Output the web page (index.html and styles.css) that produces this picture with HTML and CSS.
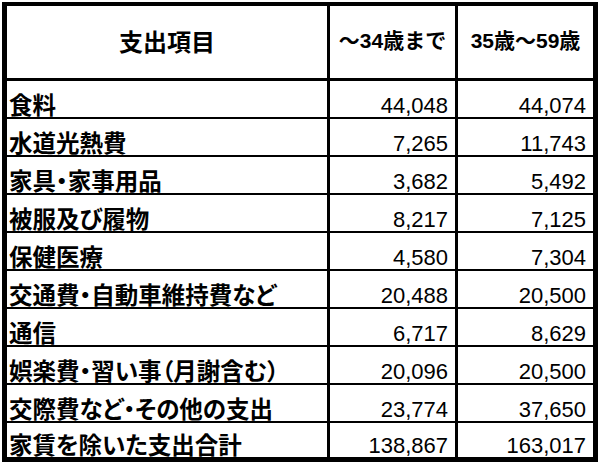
FILE: index.html
```html
<!DOCTYPE html>
<html lang="ja">
<head>
<meta charset="utf-8">
<title>支出項目</title>
<link rel="stylesheet" href="styles.css">
</head>
<body>
<table class="sheet">
  <thead>
    <tr class="head">
      <th class="c1">支出項目</th>
      <th class="c2">～34歳まで</th>
      <th class="c3">35歳～59歳</th>
    </tr>
  </thead>
  <tbody>
    <tr><td class="label">食料</td><td class="num">44,048</td><td class="num">44,074</td></tr>
    <tr><td class="label">水道光熱費</td><td class="num">7,265</td><td class="num">11,743</td></tr>
    <tr><td class="label">家具・家事用品</td><td class="num">3,682</td><td class="num">5,492</td></tr>
    <tr><td class="label">被服及び履物</td><td class="num">8,217</td><td class="num">7,125</td></tr>
    <tr><td class="label">保健医療</td><td class="num">4,580</td><td class="num">7,304</td></tr>
    <tr><td class="label">交通費・自動車維持費など</td><td class="num">20,488</td><td class="num">20,500</td></tr>
    <tr><td class="label">通信</td><td class="num">6,717</td><td class="num">8,629</td></tr>
    <tr><td class="label">娯楽費・習い事（月謝含む）</td><td class="num">20,096</td><td class="num">20,500</td></tr>
    <tr><td class="label">交際費など・その他の支出</td><td class="num">23,774</td><td class="num">37,650</td></tr>
    <tr class="last"><td class="label">家賃を除いた支出合計</td><td class="num">138,867</td><td class="num">163,017</td></tr>
  </tbody>
</table>
</body>
</html>
```

FILE: styles.css
```css
html, body {
  margin: 0;
  padding: 0;
  background: #ffffff;
}

body {
  padding: 2px 0 0 2px;
  font-family: "Liberation Sans", "Noto Sans CJK JP", sans-serif;
  color: #000000;
}

.sheet {
  border-collapse: separate;
  border-spacing: 0;
  border-top: 4px solid #000;
  border-left: 5px solid #000;
  border-right: 5px solid #000;
  border-bottom: 5px solid #000;
  table-layout: fixed;
  width: 596px;
}

.sheet th,
.sheet td {
  padding: 0;
  border-bottom: 2px solid #000;
  border-right: 3px solid #000;
  white-space: nowrap;
}

.sheet th:last-child,
.sheet td:last-child {
  border-right: none;
}

.c1 { width: 320px; }
.c2 { width: 125px; }
.c3 { width: auto; }

.sheet .head th {
  height: 69px;
  padding-bottom: 3px;
  border-bottom-width: 3px;
  text-align: center;
  vertical-align: middle;
  font-weight: 700;
  line-height: 24px;
}

.head .c1 {
  font-family: "Noto Sans CJK JP", sans-serif;
  font-size: 24px;
}

.head .c2,
.head .c3 {
  font-size: 21px;
}

tbody tr td {
  height: 36px;
  vertical-align: bottom;
}

tbody tr.last td {
  height: 34px;
  border-bottom: none;
}

.sheet td.label {
  font-family: "Noto Sans CJK JP", sans-serif;
  font-weight: 700;
  font-size: 23.5px;
  line-height: 26px;
  padding-left: 2px;
  font-feature-settings: "palt" 1;
}

.sheet td.num {
  text-align: right;
  font-size: 22px;
  line-height: 22px;
  padding-right: 7px;
}
```
